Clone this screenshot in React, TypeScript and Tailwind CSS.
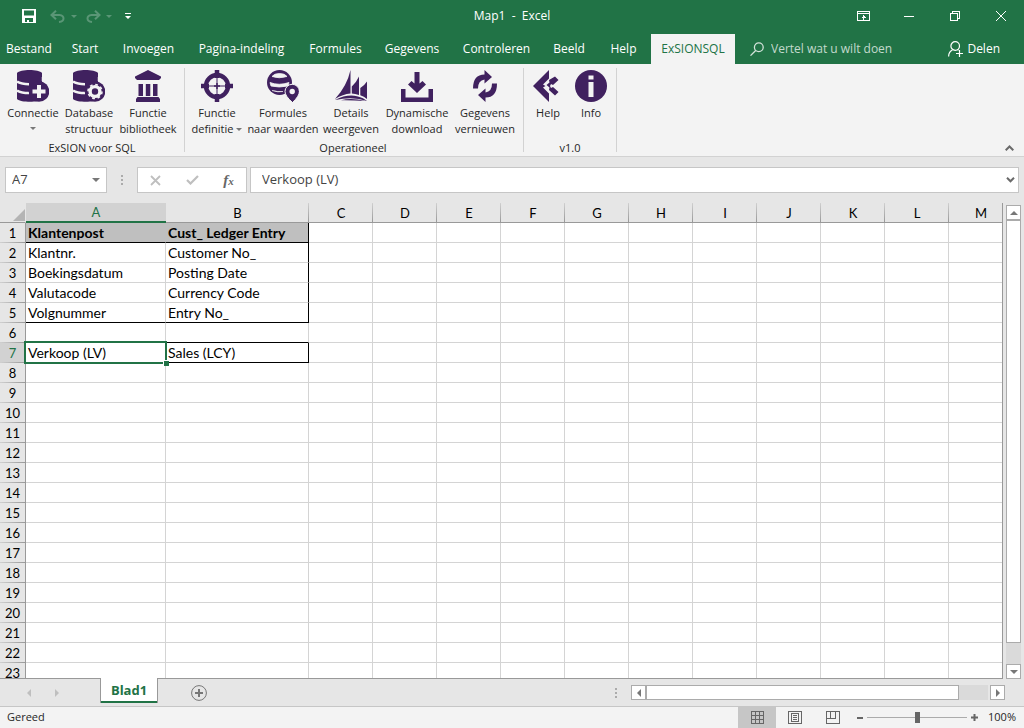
import { useState } from "react";
import type { ReactNode } from "react";
import clsx from "clsx";

const tabs = [
  { label: "Bestand", width: "w-[58px]" },
  { label: "Start", width: "w-[54px]" },
  { label: "Invoegen", width: "w-[73px]" },
  { label: "Pagina-indeling", width: "w-[113px]" },
  { label: "Formules", width: "w-[75px]" },
  { label: "Gegevens", width: "w-[78px]" },
  { label: "Controleren", width: "w-[91px]" },
  { label: "Beeld", width: "w-[54px]" },
  { label: "Help", width: "w-[55px]" },
  { label: "ExSIONSQL", width: "w-[84px]" },
];

const columns = ["A", "B", "C", "D", "E", "F", "G", "H", "I", "J", "K", "L", "M"];

const rowCount = 23;

const cells: Record<string, string> = {
  A1: "Klantenpost",
  B1: "Cust_ Ledger Entry",
  A2: "Klantnr.",
  B2: "Customer No_",
  A3: "Boekingsdatum",
  B3: "Posting Date",
  A4: "Valutacode",
  B4: "Currency Code",
  A5: "Volgnummer",
  B5: "Entry No_",
  A7: "Verkoop (LV)",
  B7: "Sales (LCY)",
};

function Caret({ className }: { className?: string }) {
  return (
    <svg viewBox="0 0 6 3" className={clsx("h-[3px] w-[6px]", className)} fill="currentColor">
      <path d="M0 0h6L3 3z" />
    </svg>
  );
}

function DatabaseBody() {
  return (
    <>
      <path d="M0 3C3-1 22-1 25 3V30C22 32 4 33 0 29z" />
      <path d="M0 11.500Q4 14.200 12 14.200M0 20.500Q4 23 12 23" fill="none" stroke="#f3f3f3" strokeWidth="2.600" />
      <path d="M25.500 7v4" stroke="#f3f3f3" strokeWidth="1.500" />
      <circle cx="22" cy="21.500" r="10.300" />
    </>
  );
}

const icons: Record<string, ReactNode> = {
  connect: (
    <>
      <DatabaseBody />
      <path d="M22 15v13M15.500 21.500h13" stroke="#f3f3f3" strokeWidth="4" />
    </>
  ),
  structure: (
    <>
      <DatabaseBody />
      <circle cx="22" cy="21.500" r="4.900" fill="none" stroke="#f3f3f3" strokeWidth="3.400" />
      <circle cx="22" cy="21.500" r="7" fill="none" stroke="#f3f3f3" strokeWidth="1.600" strokeDasharray="2.750 2.750" />
    </>
  ),
  library: (
    <path d="M16 0L29 6.500V8L27 10H5L3 8V6.500zM6.500 14h4.500v12H6.500zM13.800 14h4.500v12h-4.500zM21 14h4.500v12H21zM5.500 27h21l1.500 2v3H4v-3z" />
  ),
  target: (
    <>
      <circle cx="16" cy="16" r="11" fill="none" stroke="#40215f" strokeWidth="4.400" />
      <path d="M16 0v8M16 24v8M0 16h8M24 16h8" stroke="#40215f" strokeWidth="4.500" />
      <path d="M16 8v16M8 16h16" stroke="#7d6892" strokeWidth="1.500" />
      <path d="M16 13v6M13 16h6" stroke="#40215f" strokeWidth="1.500" />
    </>
  ),
  globe: (
    <>
      <circle cx="12.500" cy="12.500" r="12.500" />
      <path d="M5 6.500Q12 9 20 6.500Q18 3.500 12.500 3.500T5 6.500zM3 12.500Q12 16 22 12.500L21 16Q12 18 4 16zM5 20.500Q11 22.500 16 21.500" fill="#f3f3f3" stroke="#f3f3f3" strokeWidth=".8" />
      <path d="M25.500 32.500Q18 26 18 21.500a7.200 7.200 0 0 1 14.400 0Q32.400 26 25.500 32.500z" stroke="#f3f3f3" />
      <circle cx="25.200" cy="21.500" r="2.700" fill="#f3f3f3" />
    </>
  ),
  sails: (
    <>
      <path d="M15.500 0V23.500Q8 24 0 29Q12 16 15.500 0z" />
      <path d="M24 6.500V25Q20 23.500 16.800 23.500V16.500Q21 13 24 6.500z" />
      <path d="M32 11.500V29Q29 26.500 25.300 25.300V18Q29 16 32 11.500z" />
      <path d="M0 30Q12 23.800 22 26.200Q29 28 32 31Q18 26.200 0 30zM6 30.200Q17 27.500 30 31Q17 30 6 30.200z" />
    </>
  ),
  download: (
    <path d="M13.500 2h5v11.500l3-2.500 3.500 3.500L16 23l-9-8.500 3.500-3.500 3 2.500zM0 19h4.500v8.500h23V19H32v13H0z" />
  ),
  refresh: (
    <>
      <path d="M4 18.500Q4 4.500 15.500 4.500V0L23 7l-7.500 6.500V9.500Q9 10.500 9 18.500z" />
      <path d="M28 13.500Q28 27.500 16.500 27.500V32L9 25l7.500-6.500v4Q23 21.500 23 13.500z" />
    </>
  ),
  help: (
    <path d="M1 16L17 0v8.500l-6 6 2.500 1.500-2.500 1.500 6 6V32zM23 6.500l3.500 3.500-5.500 5-2-1-1 2 1 2 2-1 5.500 5-3.500 3.500-6-5.500.5-2.500-3-2.500 3-2.500-.5-2.500z" />
  ),
  info: (
    <>
      <circle cx="16" cy="16" r="16" />
      <path d="M13.500 5.500h5v4h-5zM13.500 12h5v15h-5z" fill="#f3f3f3" />
    </>
  ),
};

interface RibbonItem {
  icon: string;
  lines: string[];
  width: string;
  dropdown?: "below" | "inline";
}

const groups: { label: string; className: string; items: RibbonItem[] }[] = [
  {
    label: "ExSION voor SQL",
    className: "pl-[5px] pr-[5px]",
    items: [
      { icon: "connect", lines: ["Connectie"], width: "w-[56px]", dropdown: "below" },
      { icon: "structure", lines: ["Database", "structuur"], width: "w-[56px]" },
      { icon: "library", lines: ["Functie", "bibliotheek"], width: "w-[62px]" },
    ],
  },
  {
    label: "Operationeel",
    className: "pl-[3px] pr-[5px]",
    items: [
      { icon: "target", lines: ["Functie", "definitie"], width: "w-[58px]", dropdown: "inline" },
      { icon: "globe", lines: ["Formules", "naar waarden"], width: "w-[74px]" },
      { icon: "sails", lines: ["Details", "weergeven"], width: "w-[62px]" },
      { icon: "download", lines: ["Dynamische", "download"], width: "w-[70px]" },
      { icon: "refresh", lines: ["Gegevens", "vernieuwen"], width: "w-[66px]" },
    ],
  },
  {
    label: "v1.0",
    className: "pl-[3px] pr-[3px]",
    items: [
      { icon: "help", lines: ["Help"], width: "w-[42px]" },
      { icon: "info", lines: ["Info"], width: "w-[44px]" },
    ],
  },
];

function TitleBar() {
  return (
    <div className="grid h-8 grid-cols-[1fr_auto_1fr] items-center text-white">
      <div className="flex items-center pl-[22px]">
        <button aria-label="Opslaan">
          <svg viewBox="0 0 14 14" className="size-[14px]" fill="currentColor">
            <path fillRule="evenodd" d="M0 0h14v14H0zM2 1.500V6.500h10v-5zM3 9v4h2v-2h2v2h4V9z" />
          </svg>
        </button>
        <button aria-label="Ongedaan maken" className="ml-[14px] text-[#5a9676]">
          <svg viewBox="0 0 15 13" className="h-[13px] w-[15px]" fill="none" stroke="currentColor" strokeWidth="2">
            <path d="M6 .8L1.500 5L6 9.200M1.500 5H9.500Q13.500 5.500 13.500 8.500T9 12" />
          </svg>
        </button>
        <Caret className="ml-[6px] text-[#5a9676]" />
        <button aria-label="Opnieuw" className="ml-[9px] text-[#5a9676]">
          <svg viewBox="0 0 15 13" className="h-[13px] w-[15px]" fill="none" stroke="currentColor" strokeWidth="2">
            <path d="M9 .8L13.500 5L9 9.200M13.500 5H5.500Q1.500 5.500 1.500 8.500T6 12" />
          </svg>
        </button>
        <Caret className="ml-[5px] text-[#5a9676]" />
        <button aria-label="Werkbalk aanpassen" className="ml-[13px]">
          <svg viewBox="0 0 6 6" className="size-[6px]" fill="currentColor">
            <path d="M0 0h6v1H0zM0 3h6L3 6z" />
          </svg>
        </button>
      </div>
      <h1 className="whitespace-pre text-xs">Map1  -  Excel</h1>
      <div className="flex justify-end">
        <button aria-label="Weergaveopties voor lint" className="flex h-8 w-[46px] items-center justify-center">
          <svg viewBox="0 0 13 10" className="h-[10px] w-[13px]" fill="none" stroke="currentColor" shapeRendering="crispEdges">
            <path d="M.5.500h12v9H.5zM1 2.500h11M6.500 4v6M4.500 6.500h4M5.500 5.500h2" />
          </svg>
        </button>
        <button aria-label="Minimaliseren" className="flex h-8 w-[46px] items-center justify-center">
          <span className="h-px w-[10px] bg-white" />
        </button>
        <button aria-label="Vorig formaat" className="flex h-8 w-[46px] items-center justify-center">
          <svg viewBox="0 0 10 10" className="size-[10px]" fill="none" stroke="currentColor" shapeRendering="crispEdges">
            <path d="M.5 2.500h7v7h-7zM2.500 2V.5h7v7H8" />
          </svg>
        </button>
        <button aria-label="Sluiten" className="flex h-8 w-[46px] items-center justify-center">
          <svg viewBox="0 0 10 10" className="size-[10px]" fill="none" stroke="currentColor">
            <path d="M0 0l10 10M10 0L0 10" />
          </svg>
        </button>
      </div>
    </div>
  );
}

function TabBar() {
  const [active, setActive] = useState("ExSIONSQL");

  return (
    <div className="flex h-[30px] items-stretch text-xs text-white">
      <nav className="flex shrink-0">
        {tabs.map((tab) => (
          <button
            key={tab.label}
            onClick={() => setActive(tab.label)}
            className={clsx(
              "whitespace-nowrap text-center",
              tab.width,
              active === tab.label && "bg-[#f3f3f3] text-[#217346]"
            )}
          >
            {tab.label}
          </button>
        ))}
      </nav>
      <label className="flex flex-1 items-center gap-[7px] pl-[15px] text-[#d3e3da]">
        <svg viewBox="0 0 14 14" className="size-[14px] shrink-0" fill="none" stroke="currentColor" strokeWidth="1.300">
          <circle cx="8.800" cy="5.200" r="4.400" />
          <path d="M5.700 8.500L.5 13.600" />
        </svg>
        <input
          aria-label="Vertel wat u wilt doen"
          placeholder="Vertel wat u wilt doen"
          className="w-full min-w-0 bg-transparent outline-none placeholder:text-[#c3dacd]"
        />
      </label>
      <button className="flex items-center gap-1 pr-6">
        <svg viewBox="0 0 15 16" className="h-4 w-[15px]" fill="none" stroke="currentColor" strokeWidth="1.200">
          <circle cx="7.200" cy="5" r="4.300" />
          <path d="M.6 15.500Q.8 10.500 4.500 9M9.500 8.500l1 .7M8 12.500h7M11.500 9v7" />
        </svg>
        Delen
      </button>
    </div>
  );
}

function Ribbon() {
  return (
    <div className="flex shrink-0 border-b border-[#d2d2d2] bg-[#f3f3f3] text-[11px] text-[#262626]">
      {groups.map((group) => (
        <section key={group.label} className="flex">
          <div className={clsx("flex flex-col pt-[6px]", group.className)}>
            <div className="flex">
              {group.items.map((item) => (
                <button key={item.icon} className={clsx("flex h-[67px] flex-col items-center leading-4", item.width)}>
                  <svg viewBox="0 0 32 32" className="mb-[3px] size-8 shrink-0" fill="#40215f">
                    {icons[item.icon]}
                  </svg>
                  {item.lines.map((line, i) => (
                    <span key={line} className="flex items-center gap-[3px] whitespace-nowrap">
                      {line}
                      {item.dropdown === "inline" && i === 1 && <Caret className="text-[#777]" />}
                    </span>
                  ))}
                  {item.dropdown === "below" && <Caret className="mt-[6px] text-[#777]" />}
                </button>
              ))}
            </div>
            <p className="mt-[3px] text-center leading-4">{group.label}</p>
          </div>
          <div className="my-1 w-px bg-[#d2d2d2]" />
        </section>
      ))}
      <button aria-label="Lint samenvouwen" className="ml-auto self-end pr-[10px] pb-[5px]">
        <svg viewBox="0 0 9 6" className="h-[6px] w-[9px]" fill="none" stroke="#6a6a6a" strokeWidth="2">
          <path d="M.7 5.300L4.500 1.500l3.800 3.800" />
        </svg>
      </button>
    </div>
  );
}

function Dots() {
  return (
    <svg viewBox="0 0 2 10" className="h-[10px] w-[2px]" fill="#ababab">
      <path d="M0 0h2v2H0zM0 4h2v2H0zM0 8h2v2H0z" />
    </svg>
  );
}

function FormulaBar() {
  return (
    <div className="flex shrink-0 items-center px-[5px] py-[10px] text-[13px] text-[#444]">
      <div className="flex h-[26px] w-[102px] items-center border border-[#c6c6c6] bg-white px-[6px]">
        <input aria-label="Naamvak" defaultValue="A7" className="w-full min-w-0 outline-none" />
        <svg viewBox="0 0 8 4" className="h-1 w-2 shrink-0" fill="#777">
          <path d="M0 0h8L4 4z" />
        </svg>
      </div>
      <div className="flex w-[30px] justify-center">
        <Dots />
      </div>
      <div className="flex h-[26px] w-[110px] items-center justify-around border border-[#c6c6c6] bg-white">
        <button aria-label="Annuleren">
          <svg viewBox="0 0 11 11" className="size-[11px]" fill="none" stroke="#bfbfbf" strokeWidth="1.800">
            <path d="M1 1l9 9M10 1l-9 9" />
          </svg>
        </button>
        <button aria-label="Invoeren">
          <svg viewBox="0 0 13 10" className="h-[10px] w-[13px]" fill="none" stroke="#bfbfbf" strokeWidth="2.200">
            <path d="M1 5l3.500 3.500L12 1" />
          </svg>
        </button>
        <button aria-label="Functie invoegen" className="font-['Liberation_Serif',serif] text-[15px] leading-4 font-bold text-[#666] italic">
          f<span className="text-[11px]">x</span>
        </button>
      </div>
      <div className="ml-[3px] flex h-[26px] flex-1 items-center border border-[#c6c6c6] bg-white pr-[3px] pl-[11px]">
        <input aria-label="Formulebalk" defaultValue="Verkoop (LV)" className="w-full min-w-0 outline-none" />
        <svg viewBox="0 0 9 6" className="h-[6px] w-[9px] shrink-0" fill="none" stroke="#6a6a6a" strokeWidth="2">
          <path d="M1 .8l3.500 3.500L8 .8" />
        </svg>
      </div>
    </div>
  );
}

function Cell({ column, row }: { column: string; row: number }) {
  const value = cells[`${column}${row}`];
  const inTable = column === "A" || column === "B";
  const isSelected = column === "A" && row === 7;

  const blackBottom =
    (inTable && (row === 1 || row === 5)) || (column === "B" && (row === 6 || row === 7));
  const blackRight = column === "B" && (row <= 5 || row === 7);

  return (
    <td
      className={clsx(
        "h-5 border-r border-b pl-[2px] text-left leading-[19px] whitespace-nowrap",
        blackBottom ? "border-b-black" : "border-b-[#d4d4d4]",
        blackRight ? "border-r-black" : inTable && row === 1 ? "border-r-[#bfbfbf]" : "border-r-[#d4d4d4]",
        inTable && row === 1 ? "bg-[#bfbfbf] font-bold" : "bg-white",
        isSelected && "relative"
      )}
    >
      {value}
      {isSelected && (
        <>
          <span className="absolute -inset-[2px] border-2 border-[#217346]" />
          <span className="absolute -right-[4px] -bottom-[4px] size-[6px] border-t border-l border-white bg-[#217346]" />
        </>
      )}
    </td>
  );
}

function Grid() {
  return (
    <div className="min-h-0 flex-1 overflow-hidden border-r border-b border-[#999]">
      <table className="w-[1013px] table-fixed border-separate border-spacing-0 font-['Lato',sans-serif] text-sm text-black">
        <colgroup>
          <col className="w-[26px]" />
          <col className="w-[140px]" />
          <col className="w-[143px]" />
          {columns.slice(2).map((column) => (
            <col key={column} className="w-16" />
          ))}
        </colgroup>
        <thead className="text-[13px]">
          <tr>
            <th className="h-5 border-r border-b border-r-[#e6e6e6] border-b-[#999] bg-[#e6e6e6] p-0">
              <svg viewBox="0 0 12 12" className="mt-1 ml-auto size-3" fill="#b4b4b4">
                <path d="M12 0v12H0z" />
              </svg>
            </th>
            {columns.map((column) => (
              <th
                key={column}
                className={clsx(
                  "h-5 p-0 text-center leading-[18px] font-normal",
                  column === "A"
                    ? "border-b-2 border-[#217346] bg-[#d2d2d2] text-[#217346]"
                    : "border-b border-[#999] bg-[#e6e6e6] bg-[linear-gradient(#d0d0d0,#999)] bg-[length:1px_100%] bg-right bg-no-repeat"
                )}
              >
                {column}
              </th>
            ))}
          </tr>
        </thead>
        <tbody>
          {Array.from({ length: rowCount }, (_, i) => i + 1).map((row) => (
            <tr key={row}>
              <th
                className={clsx(
                  "h-5 border-r border-[#999] bg-[linear-gradient(90deg,#d0d0d0,#999)] bg-[length:100%_1px] bg-bottom bg-no-repeat p-0 text-center text-[13px] leading-[18px] font-normal",
                  row === 7 ? "bg-[#d2d2d2] text-[#217346]" : "bg-[#e6e6e6]"
                )}
              >
                {row}
              </th>
              {columns.map((column) => (
                <Cell key={column} column={column} row={row} />
              ))}
            </tr>
          ))}
        </tbody>
      </table>
    </div>
  );
}

function VerticalScrollbar() {
  return (
    <div className="flex w-[21px] shrink-0 flex-col px-[3px] pt-[2px]">
      <button aria-label="Omhoog" className="flex h-[15px] shrink-0 items-center justify-center border border-[#ababab] bg-white">
        <svg viewBox="0 0 8 4" className="h-1 w-2" fill="#777">
          <path d="M4 0l4 4H0z" />
        </svg>
      </button>
      <div className="flex flex-1 flex-col bg-[#dadada] pb-[21px]">
        <div className="flex-1 border border-[#ababab] bg-white" />
      </div>
      <button aria-label="Omlaag" className="flex h-[15px] shrink-0 items-center justify-center border border-[#ababab] bg-white">
        <svg viewBox="0 0 8 4" className="h-1 w-2" fill="#777">
          <path d="M0 0h8L4 4z" />
        </svg>
      </button>
    </div>
  );
}

function SheetBar() {
  return (
    <div className="flex h-[27px] shrink-0 items-center">
      <div className="flex w-[100px] shrink-0 items-center gap-6 pl-[27px]">
        <button aria-label="Vorig blad">
          <svg viewBox="0 0 4 8" className="h-2 w-1" fill="#bfbfbf">
            <path d="M4 0v8L0 4z" />
          </svg>
        </button>
        <button aria-label="Volgend blad">
          <svg viewBox="0 0 4 8" className="h-2 w-1" fill="#bfbfbf">
            <path d="M0 0v8l4-4z" />
          </svg>
        </button>
      </div>
      <button className="relative -mt-px h-[25px] w-[58px] self-start border-r border-l border-[#999] bg-white text-[13px] font-bold text-[#217346] shadow-[inset_0_-2px_#217346]">
        Blad1
      </button>
      <button aria-label="Nieuw blad" className="ml-[33px]">
        <svg viewBox="0 0 16 16" className="size-4" fill="none" stroke="#777">
          <circle cx="8" cy="8" r="7.400" />
          <path d="M8 4v8M4 8h8" strokeWidth="2" />
        </svg>
      </button>
      <div className="ml-auto flex items-center pr-[19px]">
        <Dots />
        <div className="ml-[14px] flex h-[15px] w-[357px] bg-[#dadada] pr-[29px]">
          <button aria-label="Links" className="flex w-[15px] shrink-0 items-center justify-center border border-[#ababab] bg-white">
            <svg viewBox="0 0 4 8" className="h-2 w-1" fill="#777">
              <path d="M4 0v8L0 4z" />
            </svg>
          </button>
          <div className="flex-1 border border-[#ababab] bg-white" />
        </div>
        <button aria-label="Rechts" className="ml-[2px] flex h-[15px] w-[15px] items-center justify-center border border-[#ababab] bg-white">
          <svg viewBox="0 0 4 8" className="h-2 w-1" fill="#777">
            <path d="M0 0v8l4-4z" />
          </svg>
        </button>
      </div>
    </div>
  );
}

function StatusBar() {
  return (
    <footer className="flex h-[22px] shrink-0 items-center border-t border-[#c6c6c6] bg-[#f3f3f3] text-[11px] text-[#262626]">
      <span className="pl-[7px]">Gereed</span>
      <div className="ml-auto flex items-center self-stretch">
        <button aria-label="Normaal" className="flex w-[38px] items-center justify-center self-stretch bg-[#c6c6c6]">
          <svg viewBox="0 0 13 13" className="size-[13px]" fill="none" stroke="#666" shapeRendering="crispEdges">
            <path d="M.5.500h12v12H.5zM4.500 0v13M8.500 0v13M0 4.500h13M0 8.500h13" />
          </svg>
        </button>
        <button aria-label="Pagina-indeling" className="flex w-[38px] items-center justify-center">
          <svg viewBox="0 0 14 13" className="h-[13px] w-[14px]" fill="none" stroke="#666" shapeRendering="crispEdges">
            <path d="M.5.500h13v12H.5zM3.500 2.500h7v8h-7zM5 4.500h4M5 6.500h4M5 8.500h4" />
          </svg>
        </button>
        <button aria-label="Pagina-eindevoorbeeld" className="flex w-[38px] items-center justify-center">
          <svg viewBox="0 0 14 13" className="h-[13px] w-[14px]" fill="none" stroke="#666" shapeRendering="crispEdges">
            <path d="M.5.500h13v12H.5zM4.500 0v7.500M9.500 0v7.500M0 7.500h9.500" />
          </svg>
        </button>
        <button aria-label="Uitzoomen" className="ml-[5px] h-[2px] w-[6px] bg-[#666]" />
        <input
          type="range"
          aria-label="Zoomen"
          min={0}
          max={100}
          defaultValue={50}
          className="mx-1 h-[11px] w-[100px] appearance-none bg-[linear-gradient(#ababab,#ababab)] bg-[length:100%_1px] bg-center bg-no-repeat [&::-webkit-slider-thumb]:h-[11px] [&::-webkit-slider-thumb]:w-[5px] [&::-webkit-slider-thumb]:appearance-none [&::-webkit-slider-thumb]:bg-[#666]"
        />
        <button aria-label="Inzoomen">
          <svg viewBox="0 0 7 7" className="size-[7px]" stroke="#666" strokeWidth="2">
            <path d="M3.500 0v7M0 3.500h7" />
          </svg>
        </button>
        <span className="w-[46px] pr-2 text-right">100%</span>
      </div>
    </footer>
  );
}

export default function App() {
  return (
    <div className="flex h-screen flex-col overflow-hidden bg-[#e6e6e6] font-['Open_Sans','Noto_Sans',sans-serif]">
      <header className="flex shrink-0 flex-col gap-[2px] bg-[#217346]">
        <TitleBar />
        <TabBar />
      </header>
      <Ribbon />
      <FormulaBar />
      <main className="flex min-h-0 flex-1">
        <Grid />
        <VerticalScrollbar />
      </main>
      <SheetBar />
      <StatusBar />
    </div>
  );
}
